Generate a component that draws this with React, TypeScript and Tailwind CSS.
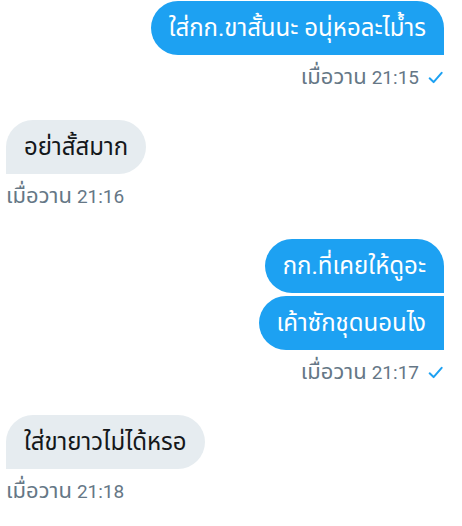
import React from 'react';

type Msg = { text: string };

interface GroupProps {
  mine: boolean;
  messages: Msg[];
  day: string;
  clock: string;
}

const Check = () => (
  <svg width="17" height="17" viewBox="0 0 16 16" className="ml-2 self-center text-[#1da1f2]">
    <path d="M2.5 8.8 L6.2 12.3 L13.8 3.6" fill="none" stroke="currentColor" strokeWidth="1.9" strokeLinecap="round" strokeLinejoin="round" />
  </svg>
);

const Group: React.FC<GroupProps> = ({ mine, messages, day, clock }) => {
  return (
    <div className={`flex flex-col ${mine ? 'items-end' : 'items-start'}`}>
      <div className={`flex flex-col gap-[3px] ${mine ? 'items-end' : 'items-start'}`}>
        {messages.map((m, i) => {
          const first = i === 0;
          let radius = '';
          if (mine) {
            radius = first ? 'rounded-[27px] rounded-br-none' : 'rounded-[27px] rounded-r-none';
          } else {
            radius = first ? 'rounded-[27px] rounded-bl-none' : 'rounded-[27px] rounded-l-none';
          }
          return (
            <div
              key={i}
              className={`h-[54px] flex items-center px-[18px] text-[24px] leading-[30px] ${radius} ${
                mine ? 'bg-[#1da1f2] text-white' : 'bg-[#e6ecf0] text-[#14171a]'
              }`}
            >
              {m.text}
            </div>
          );
        })}
      </div>
      <div className="mt-2.5 flex items-baseline h-6 leading-6 text-[#657786]">
        <span className="text-[22px]">{day}</span>
        <span className="text-[19px] ml-[5px]">{clock}</span>
        {mine && <Check />}
      </div>
    </div>
  );
};

export default function App() {
  return (
    <div
      className="w-[462px] h-[526px] overflow-hidden bg-white pl-[6px] pr-[18px] pt-[1px] flex flex-col gap-[31px]"
      style={{ fontFamily: 'Roboto, "Noto Sans Thai", "Noto Sans", sans-serif' }}
    >
      <Group mine messages={[{ text: 'ใส่กก.ขาสั้นนะ อนุ่หอละไม้ำร' }]} day="เมื่อวาน" clock="21:15" />
      <Group mine={false} messages={[{ text: 'อย่าสั้สมาก' }]} day="เมื่อวาน" clock="21:16" />
      <Group
        mine
        messages={[{ text: 'กก.ที่เคยให้ดูอะ' }, { text: 'เค้าซักชุดนอนไง' }]}
        day="เมื่อวาน"
        clock="21:17"
      />
      <Group mine={false} messages={[{ text: 'ใส่ขายาวไม่ได้หรอ' }]} day="เมื่อวาน" clock="21:18" />
    </div>
  );
}
